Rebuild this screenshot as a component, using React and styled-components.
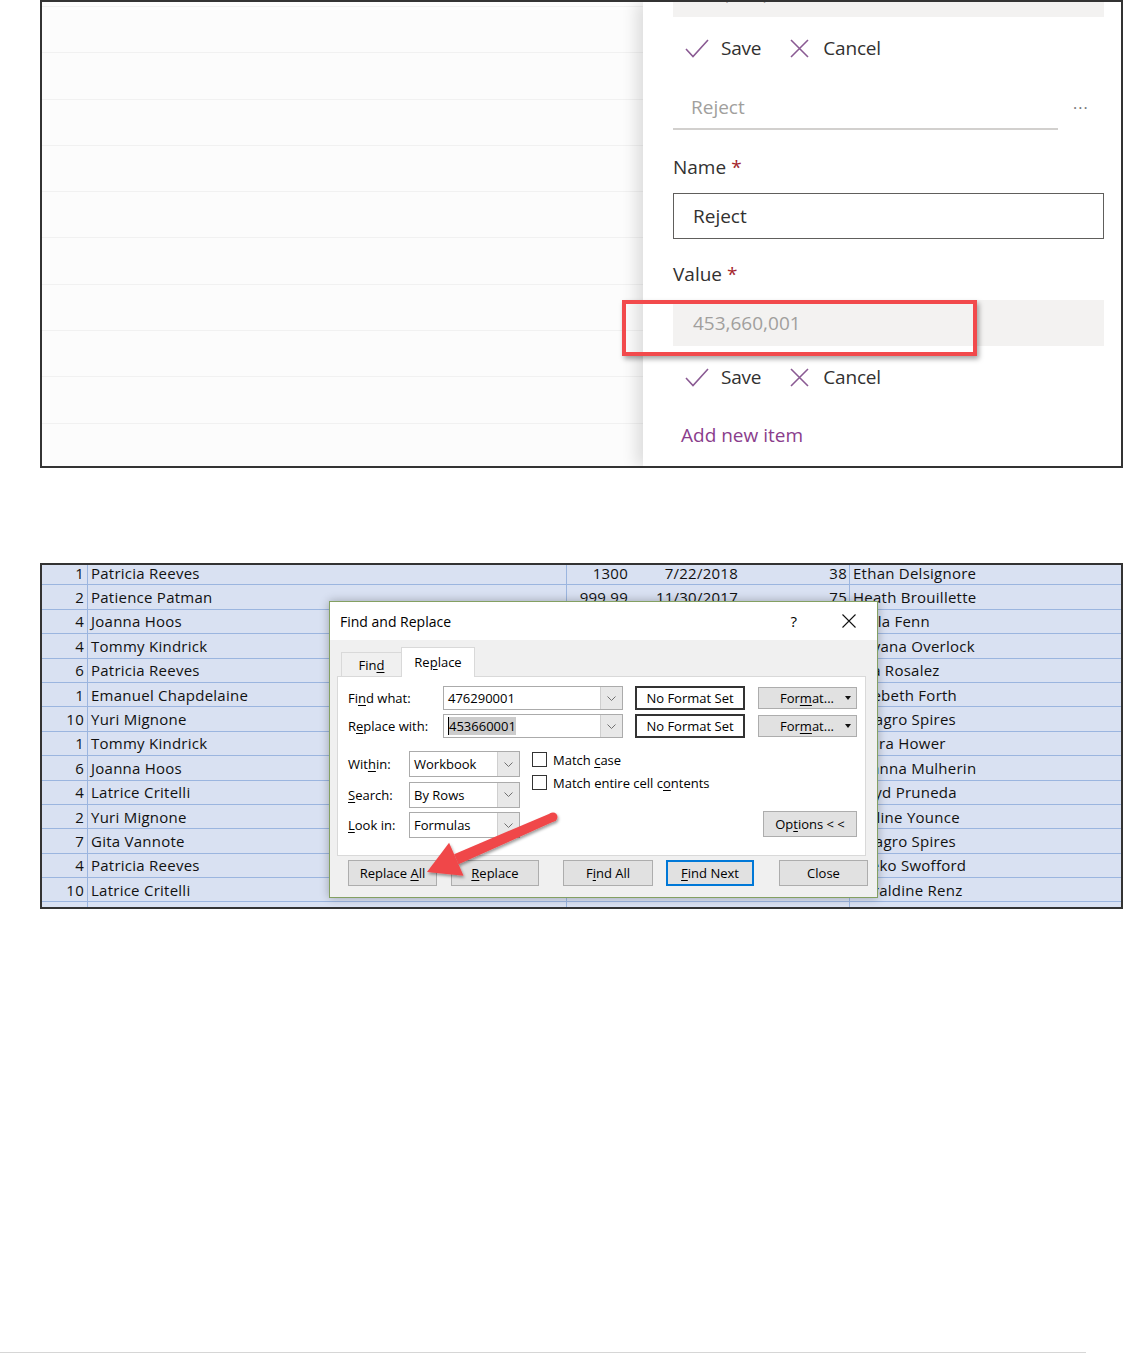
import React from "react";
import styled, { createGlobalStyle } from "styled-components";

const GlobalStyle = createGlobalStyle`
  html, body {
    margin: 0;
    padding: 0;
    background: #ffffff;
  }
  body {
    font-family: "Open Sans", "Noto Sans", sans-serif;
  }
`;

const Page = styled.div`
  width: 1124px;
  height: 1353px;
  display: flex;
  flex-direction: column;
`;

const Figure = styled.div`
  margin-left: 40px;
  margin-top: ${(p) => p.$top || 0}px;
  width: 1083px;
  height: ${(p) => p.$h}px;
  border: 2px solid #333333;
  box-sizing: border-box;
  position: relative;
  overflow: hidden;
  display: flex;
`;

/* ---------- figure 1: list + edit panel ---------- */

const ListArea = styled.div`
  flex: 1;
  background: #fcfcfc;
  padding-top: 4px;
`;

const ListRow = styled.div`
  height: 46.3px;
  box-sizing: border-box;
  border-top: 1px solid #f1f1f1;
`;

const Panel = styled.div`
  width: 478px;
  flex-shrink: 0;
  background: #ffffff;
  padding: 0 17px 0 30px;
  box-sizing: border-box;
  box-shadow: -7px 0 14px rgba(0, 0, 0, 0.12);
  position: relative;
  z-index: 1;
  display: flex;
  flex-direction: column;
  font-size: 19px;
  color: #323130;
`;

const GrayField = styled.div`
  height: 46px;
  flex-shrink: 0;
  margin-top: ${(p) => p.$mt || 0}px;
  background: #f3f2f1;
  display: flex;
  align-items: center;
  padding-left: 20px;
  color: #a19f9d;
`;

const Actions = styled.div`
  height: 40px;
  flex-shrink: 0;
  margin-top: 11px;
  padding-left: 12px;
  display: flex;
  align-items: center;
`;

const Action = styled.div`
  display: flex;
  align-items: center;
  gap: ${(p) => p.$gap}px;
  margin-right: 29px;
  letter-spacing: -0.2px;
`;

const TitleRow = styled.div`
  margin-top: 18px;
  display: flex;
  align-items: center;
`;

const UnderlineField = styled.div`
  width: 385px;
  height: 44px;
  box-sizing: border-box;
  border-bottom: 2px solid #d2d0ce;
  padding-left: 18px;
  display: flex;
  align-items: center;
  color: #a19f9d;
`;

const More = styled.span`
  margin-left: 15px;
  color: #777777;
  font-size: 16px;
  letter-spacing: 1px;
`;

const FieldLabel = styled.div`
  margin-top: ${(p) => p.$mt}px;
  height: 28px;
  line-height: 28px;
  color: #323130;
`;

const Required = styled.span`
  color: #a4262c;
  margin-left: 5px;
`;

const TextBox = styled.div`
  margin-top: 12px;
  height: 46px;
  flex-shrink: 0;
  box-sizing: border-box;
  border: 1px solid #605e5c;
  display: flex;
  align-items: center;
  padding-left: 19px;
  color: #323130;
`;

const AddLink = styled.div`
  margin-top: 24px;
  margin-left: 8px;
  height: 28px;
  line-height: 28px;
  color: #8a3d8c;
`;

const Highlight = styled.div`
  position: absolute;
  left: 580px;
  top: 298px;
  width: 355px;
  height: 56px;
  box-sizing: border-box;
  border: 4px solid #f24a4c;
  box-shadow: 2px 3px 5px rgba(0, 0, 0, 0.35);
  z-index: 2;
`;

const CheckIcon = () => (
  <svg width="24" height="19" viewBox="0 0 24 19">
    <polyline points="1,10 8,17.5 23,1" fill="none" stroke="#8a5a93" strokeWidth="1.6" />
  </svg>
);

const CrossIcon = () => (
  <svg width="19" height="19" viewBox="0 0 19 19">
    <path d="M1 1 L18 18 M18 1 L1 18" fill="none" stroke="#8a5a93" strokeWidth="1.6" />
  </svg>
);

const SaveCancel = () => (
  <Actions>
    <Action $gap={12}>
      <CheckIcon />
      Save
    </Action>
    <Action $gap={14}>
      <CrossIcon />
      Cancel
    </Action>
  </Actions>
);

/* ---------- figure 2: sheet + dialog ---------- */

const Sheet = styled.div`
  flex: 1;
  margin-top: -4px;
  background: #d9e1f2;
  font-size: 15px;
  letter-spacing: 0.25px;
  color: #111111;
`;

const SheetRow = styled.div`
  height: 24.4px;
  box-sizing: border-box;
  border-bottom: 1px solid #9bb5df;
  display: grid;
  grid-template-columns: 46px 479px 65px 110px 108px 1fr;
`;

const Cell = styled.div`
  display: flex;
  align-items: center;
  justify-content: ${(p) => (p.$right ? "flex-end" : "flex-start")};
  padding: 0 ${(p) => (p.$right ? p.$pr || 3 : 0)}px 0 ${(p) => (p.$right ? 0 : 3)}px;
  border-right: ${(p) => (p.$line ? "1px solid #9bb5df" : "none")};
  white-space: nowrap;
  overflow: hidden;
`;

const Dialog = styled.div`
  position: absolute;
  left: 287px;
  top: 36px;
  width: 549px;
  height: 297px;
  box-sizing: border-box;
  border: 1px solid #84a062;
  box-shadow: 0 0 9px rgba(0, 0, 0, 0.28);
  background: #f0f0f0;
  display: flex;
  flex-direction: column;
  font-size: 13px;
  color: #000000;
  letter-spacing: 0;
  z-index: 2;
`;

const TitleBar = styled.div`
  height: 38px;
  flex-shrink: 0;
  background: #ffffff;
  display: flex;
  align-items: center;
  justify-content: space-between;
  padding: 0 21px 0 10px;
`;

const Title = styled.div`
  font-size: 14px;
`;

const TitleTools = styled.div`
  display: flex;
  align-items: center;
  gap: 45px;
  font-size: 15px;
`;

const DialogBody = styled.div`
  flex: 1;
  padding: 7px 0 0 7px;
`;

const Tabs = styled.div`
  display: flex;
  align-items: flex-end;
  height: 30px;
  margin-left: 4px;
  margin-bottom: -1px;
  position: relative;
  z-index: 1;
`;

const Tab = styled.div`
  width: ${(p) => (p.$active ? 74 : 60)}px;
  height: ${(p) => (p.$active ? 30 : 25)}px;
  box-sizing: border-box;
  display: flex;
  align-items: center;
  justify-content: center;
  background: ${(p) => (p.$active ? "#ffffff" : "#f0f0f0")};
  border: 1px solid #d9d9d9;
  border-bottom: ${(p) => (p.$active ? "none" : "1px solid #d9d9d9")};
  border-right: ${(p) => (p.$active ? "1px solid #d9d9d9" : "none")};
  padding-bottom: ${(p) => (p.$active ? 2 : 0)}px;
`;

const TabPanel = styled.div`
  width: 529px;
  height: 180px;
  box-sizing: border-box;
  background: #ffffff;
  border: 1px solid #d9d9d9;
  padding: 9px 8px 0 10px;
  display: flex;
  flex-direction: column;
`;

const FieldGrid = styled.div`
  display: grid;
  grid-template-columns: 83px 180px 110px 99px;
  column-gap: 12px;
  row-gap: 4px;
  align-items: center;
`;

const FieldName = styled.div`
  white-space: nowrap;
`;

const U = styled.span`
  text-decoration: underline;
  text-underline-offset: 2px;
`;

const Combo = styled.div`
  height: ${(p) => p.$h || 24}px;
  box-sizing: border-box;
  border: 1px solid #ababab;
  background: #ffffff;
  display: flex;
  align-items: stretch;
  width: ${(p) => p.$w || 180}px;
`;

const ComboText = styled.div`
  flex: 1;
  display: flex;
  align-items: center;
  padding-left: 4px;
`;

const Selected = styled.span`
  background: #cccccc;
  border-left: 1px solid #000000;
`;

const DropBtn = styled.div`
  width: 21px;
  border-left: 1px solid #cfcfcf;
  background: #e8e8e8;
  display: flex;
  align-items: center;
  justify-content: center;
`;

const Chevron = () => (
  <svg width="9" height="5" viewBox="0 0 9 5">
    <polyline points="0.5,0.5 4.5,4.5 8.5,0.5" fill="none" stroke="#707070" strokeWidth="1" />
  </svg>
);

const FormatBox = styled.div`
  height: 24px;
  box-sizing: border-box;
  border: 2px solid #333333;
  display: flex;
  align-items: center;
  justify-content: center;
  white-space: nowrap;
`;

const Button = styled.div`
  width: ${(p) => p.$w || 89}px;
  height: ${(p) => p.$h || 26}px;
  box-sizing: border-box;
  background: #e1e1e1;
  border: ${(p) => (p.$focus ? "2px solid #0078d7" : "1px solid #adadad")};
  display: flex;
  align-items: center;
  justify-content: center;
  margin-left: ${(p) => p.$ml || 0}px;
  flex-shrink: 0;
  white-space: nowrap;
`;

const FormatButton = styled(Button)`
  justify-content: flex-start;
  padding: 0 5px 0 21px;
  margin-left: 1px;
`;

const Caret = styled.span`
  margin-left: auto;
  width: 0;
  height: 0;
  border-left: 3px solid transparent;
  border-right: 3px solid transparent;
  border-top: 4px solid #111111;
`;

const Lower = styled.div`
  margin-top: 13px;
  display: flex;
  align-items: flex-start;
`;

const Selects = styled.div`
  display: flex;
  flex-direction: column;
  gap: 4.5px;
`;

const SelectRow = styled.div`
  display: flex;
  align-items: center;
`;

const SmallLabel = styled.div`
  width: 61px;
`;

const Checks = styled.div`
  margin-left: 12px;
  margin-top: 1px;
  display: flex;
  flex-direction: column;
  gap: 8px;
`;

const CheckItem = styled.div`
  display: flex;
  align-items: center;
  gap: 6px;
  height: 15px;
  white-space: nowrap;
`;

const Box = styled.span`
  width: 15px;
  height: 15px;
  box-sizing: border-box;
  border: 1px solid #333333;
  background: #ffffff;
`;

const OptionsButton = styled(Button)`
  margin-left: auto;
  align-self: flex-end;
  margin-bottom: 1px;
`;

const ButtonRow = styled.div`
  display: flex;
  margin-top: 4px;
  padding-left: 11px;
`;

const Arrow = styled.svg`
  position: absolute;
  left: 370px;
  top: 235px;
  z-index: 3;
  overflow: visible;
`;

const Footer = styled.div`
  margin-top: auto;
  width: 1086px;
  height: 1px;
  background: #d6d6d6;
`;

const CloseGlyph = () => (
  <svg width="14" height="14" viewBox="0 0 14 14">
    <path d="M0.5 0.5 L13.5 13.5 M13.5 0.5 L0.5 13.5" stroke="#111" strokeWidth="1.1" fill="none" />
  </svg>
);

const leftRows = [
  [1, "Patricia Reeves"],
  [2, "Patience Patman"],
  [4, "Joanna Hoos"],
  [4, "Tommy Kindrick"],
  [6, "Patricia Reeves"],
  [1, "Emanuel Chapdelaine"],
  [10, "Yuri Mignone"],
  [1, "Tommy Kindrick"],
  [6, "Joanna Hoos"],
  [4, "Latrice Critelli"],
  [2, "Yuri Mignone"],
  [7, "Gita Vannote"],
  [4, "Patricia Reeves"],
  [10, "Latrice Critelli"],
  [3, "Gita Vannote"],
];

const rightRows = [
  ["1300", "7/22/2018", "38", "Ethan Delsignore"],
  ["999.99", "11/30/2017", "75", "Heath Brouillette"],
  ["450", "3/14/2018", "12", "Carla Fenn"],
  ["1250", "5/2/2018", "64", "Dayana Overlock"],
  ["780", "1/19/2018", "22", "Rita Rosalez"],
  ["315.5", "9/8/2017", "41", "Lizebeth Forth"],
  ["2100", "6/30/2018", "9", "Milagro Spires"],
  ["640", "2/11/2018", "57", "Laura Hower"],
  ["99.95", "8/24/2017", "33", "Shanna Mulherin"],
  ["1800", "4/5/2018", "18", "Floyd Pruneda"],
  ["525", "12/1/2017", "70", "Earline Younce"],
  ["1100", "7/7/2018", "26", "Milagro Spires"],
  ["260", "10/13/2017", "48", "Mieko Swofford"],
  ["930", "3/29/2018", "15", "Geraldine Renz"],
  ["410", "1/3/2018", "52", "Ethan Delsignore"],
];

const SelectField = ({ label, value }) => (
  <SelectRow>
    <SmallLabel>{label}</SmallLabel>
    <Combo $w={111} $h={26}>
      <ComboText>{value}</ComboText>
      <DropBtn>
        <Chevron />
      </DropBtn>
    </Combo>
  </SelectRow>
);

export default function App() {
  return (
    <Page>
      <GlobalStyle />

      <Figure $h={468}>
        <ListArea>
          {Array.from({ length: 10 }).map((_, i) => (
            <ListRow key={i} />
          ))}
        </ListArea>
        <Panel>
          <GrayField $mt={-31}>453,660,001</GrayField>
          <SaveCancel />
          <TitleRow>
            <UnderlineField>Reject</UnderlineField>
            <More>···</More>
          </TitleRow>
          <FieldLabel $mt={23}>
            Name<Required>*</Required>
          </FieldLabel>
          <TextBox>Reject</TextBox>
          <FieldLabel $mt={21}>
            Value<Required>*</Required>
          </FieldLabel>
          <GrayField $mt={12}>453,660,001</GrayField>
          <SaveCancel />
          <AddLink>Add new item</AddLink>
        </Panel>
        <Highlight />
      </Figure>

      <Figure $h={346} $top={95}>
        <Sheet>
          {leftRows.map(([n, name], i) => {
            const r = rightRows[i];
            return (
              <SheetRow key={i}>
                <Cell $right $line>{n}</Cell>
                <Cell $line>{name}</Cell>
                <Cell $right $pr={4}>{r[0]}</Cell>
                <Cell $right $pr={4}>{r[1]}</Cell>
                <Cell $right $line $pr={2}>{r[2]}</Cell>
                <Cell>{r[3]}</Cell>
              </SheetRow>
            );
          })}
        </Sheet>

        <Dialog>
          <TitleBar>
            <Title>Find and Replace</Title>
            <TitleTools>
              <span>?</span>
              <CloseGlyph />
            </TitleTools>
          </TitleBar>
          <DialogBody>
            <Tabs>
              <Tab>
                Fin<U>d</U>
              </Tab>
              <Tab $active>
                Re<U>p</U>lace
              </Tab>
            </Tabs>
            <TabPanel>
              <FieldGrid>
                <FieldName>
                  Fi<U>n</U>d what:
                </FieldName>
                <Combo>
                  <ComboText>476290001</ComboText>
                  <DropBtn>
                    <Chevron />
                  </DropBtn>
                </Combo>
                <FormatBox>No Format Set</FormatBox>
                <FormatButton $w={99} $h={22}>
                  <span>
                    For<U>m</U>at...
                  </span>
                  <Caret />
                </FormatButton>

                <FieldName>
                  R<U>e</U>place with:
                </FieldName>
                <Combo>
                  <ComboText>
                    <Selected>453660001</Selected>
                  </ComboText>
                  <DropBtn>
                    <Chevron />
                  </DropBtn>
                </Combo>
                <FormatBox>No Format Set</FormatBox>
                <FormatButton $w={99} $h={22}>
                  <span>
                    For<U>m</U>at...
                  </span>
                  <Caret />
                </FormatButton>
              </FieldGrid>

              <Lower>
                <Selects>
                  <SelectField
                    label={
                      <>
                        Wit<U>h</U>in:
                      </>
                    }
                    value="Workbook"
                  />
                  <SelectField
                    label={
                      <>
                        <U>S</U>earch:
                      </>
                    }
                    value="By Rows"
                  />
                  <SelectField
                    label={
                      <>
                        <U>L</U>ook in:
                      </>
                    }
                    value="Formulas"
                  />
                </Selects>
                <Checks>
                  <CheckItem>
                    <Box />
                    <span>
                      Match <U>c</U>ase
                    </span>
                  </CheckItem>
                  <CheckItem>
                    <Box />
                    <span>
                      Match entire cell c<U>o</U>ntents
                    </span>
                  </CheckItem>
                </Checks>
                <OptionsButton $w={94}>
                  <span>
                    Op<U>t</U>ions &lt; &lt;
                  </span>
                </OptionsButton>
              </Lower>
            </TabPanel>
            <ButtonRow>
              <Button $w={89}>
                <span>
                  Replace <U>A</U>ll
                </span>
              </Button>
              <Button $w={88} $ml={14}>
                <span>
                  <U>R</U>eplace
                </span>
              </Button>
              <Button $w={90} $ml={24}>
                <span>
                  F<U>i</U>nd All
                </span>
              </Button>
              <Button $w={88} $ml={13} $focus>
                <span>
                  <U>F</U>ind Next
                </span>
              </Button>
              <Button $w={89} $ml={25}>
                <span>Close</span>
              </Button>
            </ButtonRow>
          </DialogBody>
        </Dialog>

        <Arrow width="160" height="90" viewBox="0 0 160 90">
          <defs>
            <filter id="arrowShadow" x="-20%" y="-20%" width="140%" height="160%">
              <feDropShadow dx="1" dy="2" stdDeviation="1.5" floodColor="#000" floodOpacity="0.4" />
            </filter>
          </defs>
          <g filter="url(#arrowShadow)" fill="#f04749">
            <circle cx="141" cy="17" r="4.5" />
            <polygon points="142.8,21.1 139.2,12.9 42.1,54.2 46.5,64.2" />
            <polygon points="15,72 37.1,42.7 51.5,75.7" />
          </g>
        </Arrow>
      </Figure>

      <Footer />
    </Page>
  );
}
